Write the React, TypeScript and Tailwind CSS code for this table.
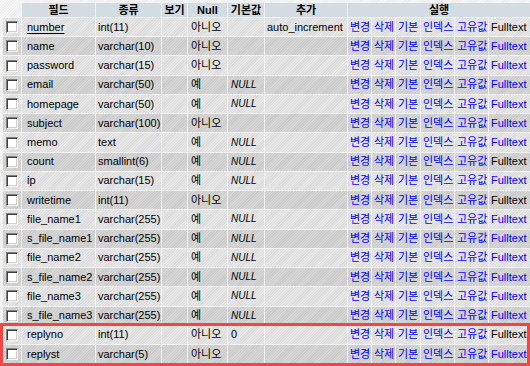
import React from "react";

type Row = { f: string; t: string; n: string; d?: string; e?: string; ft?: boolean; pk?: boolean };

const rows: Row[] = [
  { f: "number", t: "int(11)", n: "아니오", e: "auto_increment", ft: false, pk: true },
  { f: "name", t: "varchar(10)", n: "아니오", ft: true },
  { f: "password", t: "varchar(15)", n: "아니오", ft: true },
  { f: "email", t: "varchar(50)", n: "예", d: "NULL", ft: true },
  { f: "homepage", t: "varchar(50)", n: "예", d: "NULL", ft: true },
  { f: "subject", t: "varchar(100)", n: "아니오", ft: true },
  { f: "memo", t: "text", n: "예", d: "NULL", ft: true },
  { f: "count", t: "smallint(6)", n: "예", d: "NULL", ft: false },
  { f: "ip", t: "varchar(15)", n: "예", d: "NULL", ft: true },
  { f: "writetime", t: "int(11)", n: "아니오", ft: false },
  { f: "file_name1", t: "varchar(255)", n: "예", d: "NULL", ft: true },
  { f: "s_file_name1", t: "varchar(255)", n: "예", d: "NULL", ft: true },
  { f: "file_name2", t: "varchar(255)", n: "예", d: "NULL", ft: true },
  { f: "s_file_name2", t: "varchar(255)", n: "예", d: "NULL", ft: true },
  { f: "file_name3", t: "varchar(255)", n: "예", d: "NULL", ft: true },
  { f: "s_file_name3", t: "varchar(255)", n: "예", d: "NULL", ft: true },
  { f: "replyno", t: "int(11)", n: "아니오", d: "0", ft: false },
  { f: "replyst", t: "varchar(5)", n: "아니오", ft: true },
];

const LIGHT =
  "bg-[image:repeating-linear-gradient(135deg,#e7e7e7_0px,#e7e7e7_1px,#dcdcdc_1px,#dcdcdc_2px)]";
const DARK =
  "bg-[image:repeating-linear-gradient(135deg,#d6d6d6_0px,#d6d6d6_1px,#cbcbcb_1px,#cbcbcb_2px)]";

function Checkbox() {
  return (
    <div className="w-[12px] h-[12px] bg-white border border-t-[#808080] border-l-[#808080] border-b-[#f4f4f4] border-r-[#f4f4f4] shadow-[inset_1px_1px_0_#404040,inset_-1px_-1px_0_#d4d0c8]" />
  );
}

const cell = "flex items-center overflow-hidden whitespace-nowrap leading-none";

export default function App() {
  const actions = ["변경", "삭제", "기본", "인덱스", "고유값"];
  return (
    <div
      className="relative w-[530px] h-[366px] overflow-hidden pt-[3px] pl-[3px] text-[11px] text-black bg-[image:repeating-linear-gradient(135deg,#f6f6f6_0px,#f6f6f6_1px,#ededed_1px,#ededed_2px)]"
      style={{ fontFamily: '"Liberation Sans", Arial, "Noto Sans CJK KR", sans-serif' }}
    >
      <div className="grid gap-px grid-cols-[18px_73px_65px_25px_39px_36px_82px_23px_23px_24px_33px_33px_41px] grid-rows-[14px_repeat(18,18.24px)]">
        <div />
        {["필드", "종류", "보기", "Null", "기본값", "추가"].map((h) => (
          <div key={h} className={`${cell} justify-center bg-[#d3dce3] font-bold`}>
            {h}
          </div>
        ))}
        <div className={`${cell} justify-center bg-[#d3dce3] font-bold col-span-6`}>실행</div>

        {rows.map((r, i) => {
          const bg = i % 2 === 0 ? LIGHT : DARK;
          return (
            <React.Fragment key={r.f}>
              <div className={`${cell} justify-center ${bg}`}>
                <Checkbox />
              </div>
              <div className={`${cell} pl-[5px] ${bg}`}>
                <span className={r.pk ? "underline underline-offset-2" : ""}>{r.f}</span>
              </div>
              <div className={`${cell} pl-[2px] ${bg}`}>{r.t}</div>
              <div className={`${cell} ${bg}`} />
              <div className={`${cell} pl-[3px] ${bg}`}>{r.n}</div>
              <div className={`${cell} pl-[3px] ${bg}`}>
                {r.d === "NULL" ? <i className="text-[10px]">NULL</i> : r.d}
              </div>
              <div className={`${cell} pl-[2px] ${bg}`}>{r.e}</div>
              {actions.map((a) => (
                <div key={a} className={`${cell} pl-[2px] ${bg}`}>
                  <a className="text-[#0000ff] no-underline">{a}</a>
                </div>
              ))}
              <div className={`${cell} pl-[2px] ${bg}`}>
                {r.ft ? <a className="text-[#0000ff] no-underline">Fulltext</a> : <span>Fulltext</span>}
              </div>
            </React.Fragment>
          );
        })}
      </div>
      <div className="absolute left-0 top-[323px] w-[530px] h-[43px] border-[3px] border-[#f04646]" />
    </div>
  );
}
